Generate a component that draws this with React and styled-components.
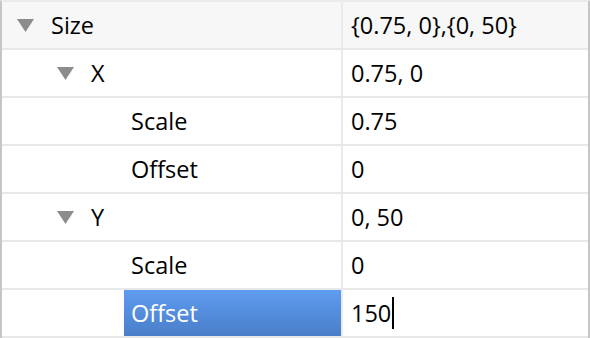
import React from "react";
import styled, { createGlobalStyle } from "styled-components";

const GlobalStyle = createGlobalStyle`
  html, body {
    margin: 0;
    padding: 0;
    background: #ffffff;
  }
`;

const Tree = styled.div`
  width: 590px;
  height: 338px;
  box-sizing: border-box;
  border-left: 2px solid #c6c6c6;
  border-right: 2px solid #c6c6c6;
  border-top: 2px solid #ebebeb;
  font-family: "Open Sans", "Noto Sans", sans-serif;
  font-size: 23.5px;
  color: #000;
  overflow: hidden;
`;

const Row = styled.div`
  display: flex;
  height: 46px;
  border-bottom: 2px solid #e8e8e8;
  background: ${(p) => (p.$shade ? "#f7f7f7" : "#ffffff")};
`;

const NameCell = styled.div`
  width: 341px;
  flex: none;
  display: flex;
  align-items: center;
  box-sizing: border-box;
  padding-left: ${(p) => 15 + p.$level * 40}px;
  border-right: 2px solid #ebebeb;
`;

const Toggle = styled.span`
  width: 35px;
  flex: none;
  display: flex;
  align-items: center;
`;

const Label = styled.span`
  flex: 1;
  align-self: stretch;
  display: flex;
  align-items: center;
  margin-left: -8px;
  padding-left: 7px;
  ${(p) =>
    p.$selected &&
    `
    color: #ffffff;
    background: linear-gradient(#5e9cf0, #4a7ec9);
  `}
`;

const ValueCell = styled.div`
  flex: 1;
  display: flex;
  align-items: center;
  padding-left: 8px;
`;

const Caret = styled.span`
  display: inline-block;
  width: 2px;
  height: 32px;
  margin-left: 1px;
  background: #000;
`;

function Arrow() {
  return (
    <svg width="17" height="13" viewBox="0 0 17 13">
      <path d="M0 0 H17 L8.5 13 Z" fill="#8c8c8c" />
    </svg>
  );
}

const rows = [
  { name: "Size", value: "{0.75, 0},{0, 50}", level: 0, open: true, shade: true },
  { name: "X", value: "0.75, 0", level: 1, open: true },
  { name: "Scale", value: "0.75", level: 2 },
  { name: "Offset", value: "0", level: 2 },
  { name: "Y", value: "0, 50", level: 1, open: true },
  { name: "Scale", value: "0", level: 2 },
  { name: "Offset", value: "150", level: 2, selected: true, editing: true },
];

export default function App() {
  return (
    <>
      <GlobalStyle />
      <Tree>
        {rows.map((r, i) => (
          <Row key={i} $shade={r.shade}>
            <NameCell $level={r.level}>
              <Toggle>{r.open && <Arrow />}</Toggle>
              <Label $selected={r.selected}>{r.name}</Label>
            </NameCell>
            <ValueCell>
              {r.value}
              {r.editing && <Caret />}
            </ValueCell>
          </Row>
        ))}
      </Tree>
    </>
  );
}
